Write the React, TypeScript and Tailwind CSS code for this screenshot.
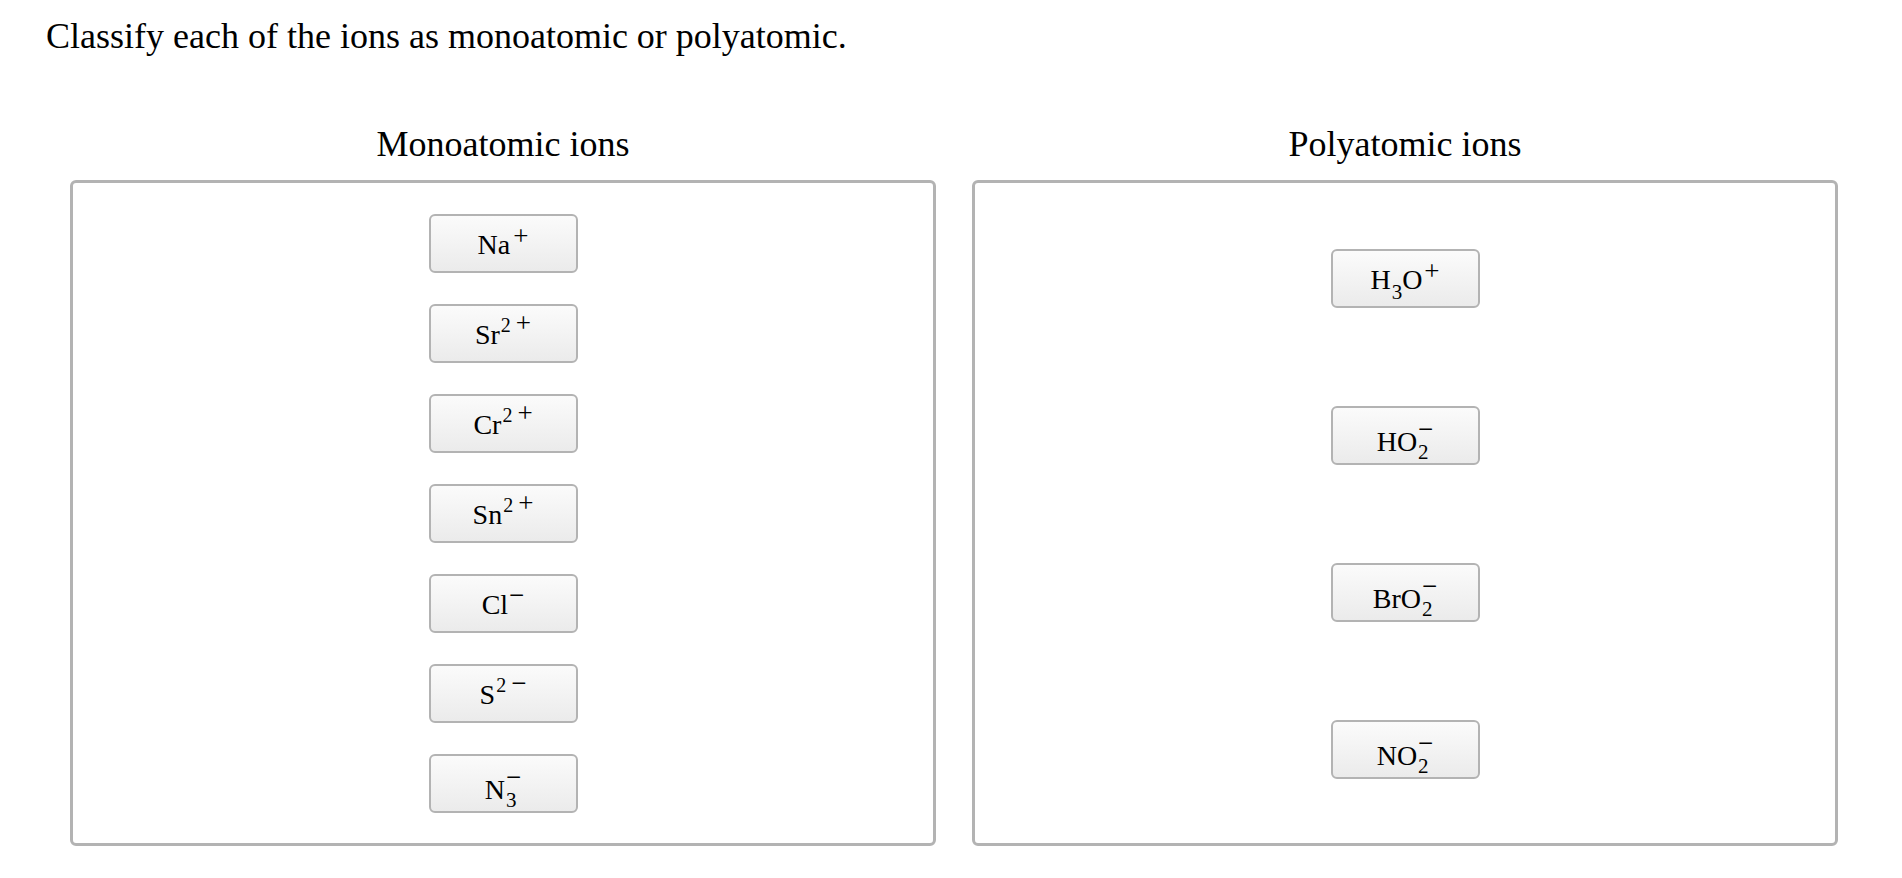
import type { ReactNode } from "react";

const Tile = ({ children }: { children: ReactNode }) => (
  <div className="w-[149px] h-[59px] flex items-center justify-center rounded-[6px] border-2 border-[#b3b3b3] bg-linear-to-b from-[#fbfbfb] to-[#ebebeb] text-[28px] leading-none text-black">
    <span className="inline-flex items-end translate-y-[1px]">{children}</span>
  </div>
);

const Sup = ({ children }: { children: ReactNode }) => (
  <span className="relative -top-[14px] ml-[1px] text-[20px] leading-none">{children}</span>
);

const Sign = ({ children, cls }: { children: ReactNode; cls: string }) => (
  <span className={`relative ${cls} text-[27px] leading-none`}>{children}</span>
);

// subscript below, charge above, stacked in one column
const SubSup = ({ sub, sup }: { sub: string; sup: string }) => (
  <span className="inline-flex flex-col items-start ml-[1px] translate-y-[5px]">
    <span className="h-[14px] text-[27px] leading-[14px]">{sup}</span>
    <span className="mt-[8px] text-[21px] leading-[17px]">{sub}</span>
  </span>
);

const mono = [
  <Tile key="na">Na<Sign cls="-top-[9px] ml-[3px]">+</Sign></Tile>,
  <Tile key="sr">Sr<Sup>2</Sup><Sign cls="-top-[12px] ml-[5px]">+</Sign></Tile>,
  <Tile key="cr">Cr<Sup>2</Sup><Sign cls="-top-[12px] ml-[5px]">+</Sign></Tile>,
  <Tile key="sn">Sn<Sup>2</Sup><Sign cls="-top-[12px] ml-[5px]">+</Sign></Tile>,
  <Tile key="cl">Cl<Sign cls="-top-[10px] ml-[1px]">−</Sign></Tile>,
  <Tile key="s">S<Sup>2</Sup><Sign cls="-top-[12px] ml-[5px]">−</Sign></Tile>,
  <Tile key="n3">N<SubSup sub="3" sup="−" /></Tile>,
];

const poly = [
  <Tile key="h3o">
    H<span className="relative top-[9px] ml-[1px] text-[21px] leading-none">3</span>O
    <Sign cls="-top-[9px] ml-[2px]">+</Sign>
  </Tile>,
  <Tile key="ho2">HO<SubSup sub="2" sup="−" /></Tile>,
  <Tile key="bro2">BrO<SubSup sub="2" sup="−" /></Tile>,
  <Tile key="no2">NO<SubSup sub="2" sup="−" /></Tile>,
];

export default function App() {
  return (
    <div className="w-full h-[878px] bg-white text-black font-['Liberation_Serif',serif]">
      <h1 className="pl-[46px] pt-[15px] text-[36px] leading-[42px] font-normal">
        Classify each of the ions as monoatomic or polyatomic.
      </h1>
      <div className="grid grid-cols-2 gap-[36px] pl-[70px] pr-[64px] mt-[66px]">
        <div className="flex flex-col">
          <p className="text-center text-[36px] leading-[42px]">Monoatomic ions</p>
          <div className="mt-[15px] h-[666px] rounded-[6px] border-[3px] border-[#b3b3b3] flex flex-col items-center pt-[31px] gap-[31px]">
            {mono}
          </div>
        </div>
        <div className="flex flex-col">
          <p className="text-center text-[36px] leading-[42px]">Polyatomic ions</p>
          <div className="mt-[15px] h-[666px] rounded-[6px] border-[3px] border-[#b3b3b3] flex flex-col items-center pt-[66px] gap-[98px]">
            {poly}
          </div>
        </div>
      </div>
    </div>
  );
}
